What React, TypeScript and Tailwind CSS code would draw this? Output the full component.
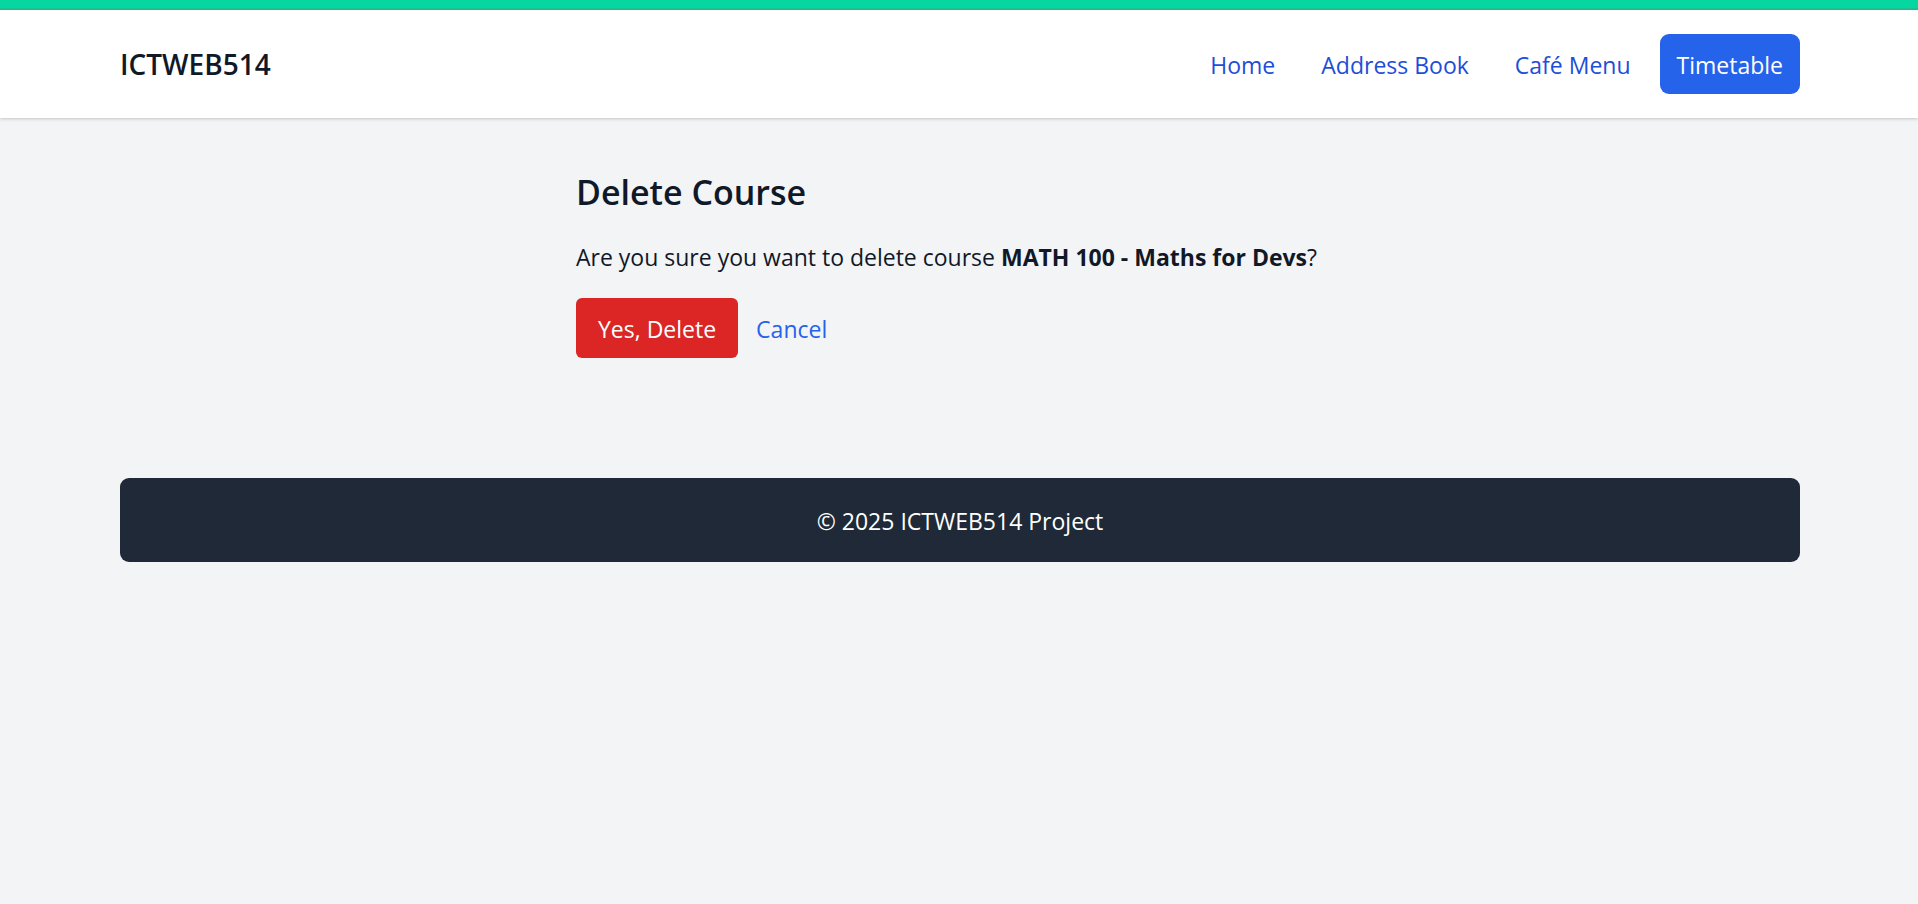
const links = [
  { label: "Home", active: false },
  { label: "Address Book", active: false },
  { label: "Café Menu", active: false },
  { label: "Timetable", active: true },
];

export default function App() {
  return (
    <div className="min-h-screen bg-gray-100 font-['Open_Sans',sans-serif] text-[23px] leading-9 text-[#111827]">
      <div className="h-[10px] border-b-2 border-[#1bc493] bg-[#06d6a0]" />
      <header className="bg-white pl-0.5 shadow-[0_1px_4px_rgba(0,0,0,0.12),0_1px_2px_rgba(0,0,0,0.08)]">
        <div className="mx-auto flex max-w-[1728px] items-center justify-between p-6">
          <a href="#" className="text-[28px] leading-[38px] font-semibold">
            ICTWEB514
          </a>
          <nav className="flex gap-3">
            {links.map((link) => (
              <a
                key={link.label}
                href="#"
                className={
                  link.active
                    ? "rounded-[9px] bg-[#2563eb] px-[17px] pt-[13px] pb-[11px] text-white"
                    : "rounded-[9px] px-[17px] pt-[13px] pb-[11px] text-[#1d4ed8]"
                }
              >
                {link.label}
              </a>
            ))}
          </nav>
        </div>
      </header>
      <div className="pl-0.5">
        <main className="mx-auto max-w-3xl pt-[50px] pb-[120px]">
          <h1 className="mb-[23px] text-[34px] leading-[48px] font-semibold">Delete Course</h1>
          <p className="mb-[23px]">
            Are you sure you want to delete course{" "}
            <strong className="font-bold">MATH 100 - Maths for Devs</strong>?
          </p>
          <form className="flex items-center gap-[18px]" onSubmit={(e) => e.preventDefault()}>
            <button type="submit" className="rounded-md bg-[#dc2626] px-[22px] pt-[13px] pb-[11px] text-white">
              Yes, Delete
            </button>
            <a href="#" className="pt-0.5 text-[#2563eb]">
              Cancel
            </a>
          </form>
        </main>
        <div className="mx-auto max-w-[1728px] px-6">
          <footer className="rounded-[9px] bg-[#1f2937] px-6 pt-[25px] pb-[23px] text-center text-white">
            © 2025 ICTWEB514 Project
          </footer>
        </div>
      </div>
    </div>
  );
}
